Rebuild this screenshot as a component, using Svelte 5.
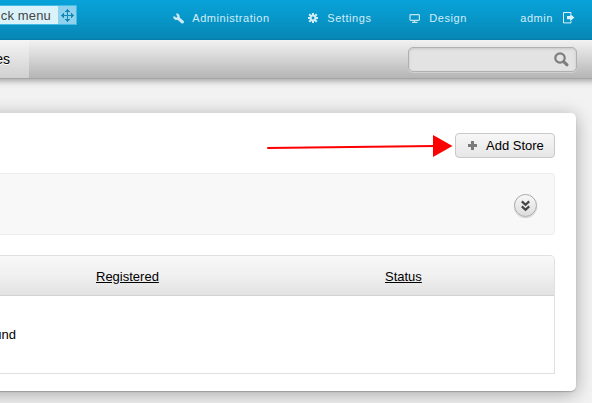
<script>
  const columns = [
    { label: 'Registered', width: 289 },
    { label: 'Status', width: 169 }
  ];
</script>

<div class="page">
  <header class="topbar">
    <div class="quick">
      <span class="quick-label">ck menu</span>
      <span class="quick-move">
        <svg width="13" height="13" viewBox="0 0 13 13" fill="#1489b5" shape-rendering="crispEdges">
          <path d="M6 0h1v1h1v1h1v1H7v3h3V4h1v1h1v1h1v1h-1v1h-1v1h-1V7H7v3h2v1H8v1H7v1H6v-1H5v-1H4v-1h2V7H3v2H2V8H1V7H0V6h1V5h1V4h1v2h3V3H4V2h1V1h1z" />
        </svg>
      </span>
    </div>
    <nav class="links">
      <a class="admin" href="#administration">
        <svg width="12" height="11" viewBox="0 0 12 11" fill="none" stroke="#cfeaf5">
          <path d="M5 5.2 9.4 9" stroke-width="3" stroke-linecap="round" />
          <path d="M3.4 1.4A2.2 2.2 0 1 1 1.2 3.6" stroke-width="2.2" />
        </svg>
        <span>Administration</span>
      </a>
      <a class="settings" href="#settings">
        <svg width="10" height="10" viewBox="0 0 10 10" fill="none" stroke="#d3edf7">
          <circle cx="5" cy="5" r="2.4" stroke-width="2" />
          <path d="M5 0v2M5 8v2M0 5h2M8 5h2M1.2 1.2l1.6 1.6M7.2 7.2l1.6 1.6M8.8 1.2 7.2 2.8M2.8 7.2 1.2 8.8" stroke-width="2" />
        </svg>
        <span>Settings</span>
      </a>
      <a class="design" href="#design">
        <svg width="12" height="9" viewBox="0 0 12 9" fill="none" stroke="#c5e7f4">
          <rect x="1" y=".6" width="9.4" height="5.8" rx=".8" stroke-width="1.2" />
          <path d="M5.5 6.5V8M3 8.4h5.5" stroke-width="1.2" />
        </svg>
        <span>Design</span>
      </a>
      <a class="user" href="#logout">
        <span>admin</span>
        <svg width="12" height="12" viewBox="0 0 12 12">
          <path d="M8 2.2V.5H.5v10.4H8V9.2" fill="none" stroke="#e0f2f9" />
          <path d="M4 4h3.2V2L11.4 5.6 7.2 9.2V7.3H4z" fill="#e0f2f9" />
        </svg>
      </a>
    </nav>
  </header>

  <div class="menubar">
    <div class="tab"><span>es</span></div>
    <div class="search">
      <svg width="15" height="15" viewBox="0 0 15 15" fill="none" stroke="#7d7d7d">
        <circle cx="6" cy="6" r="4.7" stroke-width="2.2" />
        <path d="m9.6 9.6 3.4 3.2" stroke-width="3" stroke-linecap="round" />
      </svg>
    </div>
  </div>

  <main class="card">
    <div class="actions">
      <svg class="arrow" width="188" height="26" viewBox="0 0 188 26">
        <path d="M1 15 168 13" stroke="#f00" stroke-width="2" stroke-linecap="round" />
        <path d="M166 2v22l19.5-11z" fill="#f00" />
      </svg>
      <button class="add">
        <svg width="9" height="9" viewBox="0 0 9 9" fill="#7b7b7b"><path d="M3 0h3v3h3v3H6v3H3V6H0V3h3z" /></svg>
        <span>Add Store</span>
      </button>
    </div>

    <section class="filter">
      <span class="toggle">
        <svg width="9" height="12" viewBox="0 0 9 12" fill="none" stroke="#444" stroke-width="2.2">
          <path d="m.8 1.4 3.7 3.4 3.7-3.4M.8 6.4l3.7 3.4 3.7-3.4" />
        </svg>
      </span>
    </section>

    <section class="grid">
      <div class="head">
        {#each columns as col}
          <div style="width: {col.width}px"><span>{col.label}</span></div>
        {/each}
      </div>
      <div class="row"><span>und</span></div>
    </section>
  </main>
</div>

<style>
  :global(body) { overflow: hidden; }
  .page {
    width: 592px;
    height: 403px;
    overflow: hidden;
    background: #f2f2f2;
    font: 13px/16px "Liberation Sans", Arial, sans-serif;
    color: #000;
  }
  svg { display: block; flex: none; }
  .topbar {
    position: relative;
    z-index: 1;
    box-sizing: border-box;
    height: 40px;
    display: flex;
    justify-content: space-between;
    align-items: flex-start;
    background: linear-gradient(#08a3da, #0788b6 95%, #067ca7);
  }
  .quick {
    display: flex;
    box-sizing: border-box;
    width: 77px;
    height: 20px;
    margin-top: 5px;
    border: 1px solid #43bbe4;
    border-left: 0;
    background: #daf3fa;
  }
  .quick-label {
    width: 58px;
    box-sizing: border-box;
    padding-right: 7px;
    display: flex;
    justify-content: flex-end;
    line-height: 19px;
    letter-spacing: .15px;
    color: #444;
    white-space: nowrap;
  }
  .quick-move {
    width: 18px;
    display: flex;
    align-items: center;
    justify-content: center;
    background: #8dd1ed;
  }
  .links {
    display: flex;
    height: 36px;
    padding-right: 17px;
    font-size: 11px;
    letter-spacing: .55px;
  }
  .links a {
    display: flex;
    align-items: center;
    color: #d3edf7;
    text-decoration: none;
  }
  .admin { width: 135px; gap: 7px; }
  .settings { width: 101px; gap: 9px; }
  .design { width: 111px; gap: 8px; }
  .user { gap: 10px; }
  .menubar {
    box-sizing: border-box;
    height: 39px;
    margin: 0 -20px;
    padding: 0 20px;
    display: flex;
    justify-content: space-between;
    background: linear-gradient(#f2f2f2, #dadada 40%, #b5b5b5);
    border-bottom: 1px solid #a5a5a5;
    box-shadow: 0 1px 7px rgba(0, 0, 0, .42);
  }
  .tab {
    width: 29px;
    background: linear-gradient(#f5f5f5, #d0d0d0);
  }
  .tab span {
    display: flex;
    justify-content: flex-end;
    width: 10px;
    font-size: 14px;
    line-height: 38px;
    text-shadow: 0 1px #fff;
  }
  .search {
    box-sizing: border-box;
    width: 169px;
    height: 25px;
    margin: 7px 15px 0 0;
    padding-right: 7px;
    display: flex;
    align-items: center;
    justify-content: flex-end;
    border: 1px solid #b0b0b0;
    border-radius: 5px;
    background: #e3e3e3;
    box-shadow: inset 0 1px 3px rgba(0, 0, 0, .12), 0 1px #d0d0d0;
  }
  .card {
    box-sizing: border-box;
    width: 616px;
    height: 278px;
    margin: 34px 0 0 -40px;
    padding: 20px 21px 0 40px;
    background: #fff;
    border-radius: 5px;
    box-shadow: 0 1px 1px rgba(0, 0, 0, .2), 0 3px 18px rgba(0, 0, 0, .32);
  }
  .actions { display: flex; justify-content: flex-end; height: 40px; }
  .add {
    box-sizing: border-box;
    width: 100px;
    height: 25px;
    padding: 0 0 0 12px;
    display: flex;
    align-items: center;
    gap: 9px;
    font: inherit;
    color: #000;
    border: 1px solid #c9c9c9;
    border-radius: 4px;
    background: linear-gradient(#f7f7f7, #e6e6e6);
    white-space: nowrap;
  }
  .filter {
    box-sizing: border-box;
    height: 62px;
    display: flex;
    justify-content: flex-end;
    align-items: center;
    padding: 3px 17px 0 0;
    background: #f8f8f8;
    border: 1px solid #ededed;
    border-left: 0;
    border-radius: 0 4px 4px 0;
  }
  .toggle {
    box-sizing: border-box;
    width: 23px;
    height: 23px;
    display: flex;
    align-items: center;
    justify-content: center;
    border: 1px solid #a8a8a8;
    border-radius: 50%;
    background: linear-gradient(#f8f8f8, #dcdcdc);
    box-shadow: 0 1px 1px rgba(0, 0, 0, .15);
  }
  .grid {
    box-sizing: border-box;
    height: 119px;
    margin-top: 20px;
    border: 1px solid #e0e0e0;
    border-left: 0;
    border-top-right-radius: 5px;
  }
  .head {
    box-sizing: border-box;
    height: 40px;
    padding: 3px 0 0 96px;
    display: flex;
    align-items: center;
    background: linear-gradient(#f8f8f8, #f0f0f0 50%, #e2e2e2);
    border-bottom: 1px solid #d3d3d3;
    border-top-right-radius: 4px;
  }
  .head span { text-decoration: underline; }
  .row {
    width: 16px;
    height: 77px;
    display: flex;
    justify-content: flex-end;
    align-items: center;
  }
</style>
